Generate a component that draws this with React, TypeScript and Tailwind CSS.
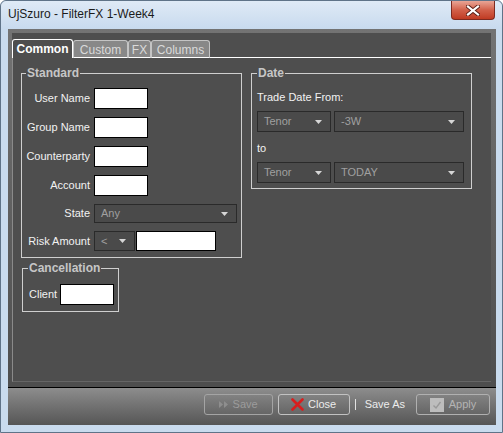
import React from 'react';

const Arrow = () => (
  <svg width="7" height="4" viewBox="0 0 7 4" className="shrink-0">
    <path d="M0 0h7L3.5 4z" fill="#d6d6d6" />
  </svg>
);

const Dropdown = ({ value, className }: { value: string; className: string }) => (
  <div className={`flex items-center justify-between border border-[#2a2a2a] bg-[#4a4a4a] pl-[6px] pr-[8px] ${className}`}>
    <span className="text-[11px] leading-none text-[#a0a0a0]">{value}</span>
    <Arrow />
  </div>
);

const Field = ({ className }: { className: string }) => (
  <input type="text" className={`border border-black bg-white outline-none ${className}`} />
);

const Legend = ({ children, className }: { children: React.ReactNode; className: string }) => (
  <legend className={`px-[1px] text-[12px] font-bold leading-[14px] text-[#c6c6c6] ${className}`}>{children}</legend>
);

const App = () => {
  const rows = ['User Name', 'Group Name', 'Counterparty', 'Account'];

  return (
    <div className="h-[433px] w-[503px] font-['Liberation_Sans',Arial,sans-serif] select-none">
      <div className="flex h-full w-full flex-col rounded-t-[6px] border border-[#5f7388] bg-[#c9dbee] pb-[7px] pl-[7px] pr-[6px]">
        {/* Title bar */}
        <div className="-mx-[7px] -mr-[6px] flex h-[28px] shrink-0 items-start justify-between rounded-t-[6px] bg-gradient-to-b from-[#dfeaf6] to-[#c8daee] pl-[7px]">
          <span className="pt-[6px] text-[12px] leading-[15px] text-[#1b1b1b]">UjSzuro - FilterFX 1-Week4</span>
          <div className="mr-[7px] flex h-[19px] w-[44px] items-center justify-center rounded-b-[4px] border border-t-0 border-[#7d2a20] bg-gradient-to-b from-[#e8a596] via-[#d2604a] to-[#c03a22]">
            <svg width="14" height="11" viewBox="0 0 14 11">
              <path d="M2 1.5l10 8M12 1.5l-10 8" stroke="#5a1e16" strokeWidth="4" strokeLinecap="square" />
              <path d="M2 1.5l10 8M12 1.5l-10 8" stroke="#ffffff" strokeWidth="2.2" strokeLinecap="square" />
            </svg>
          </div>
        </div>

        {/* Client area */}
        <div className="flex flex-1 flex-col">
          <div className="h-[358px] shrink-0 bg-gradient-to-b from-[#737373] to-[#4e4e4e] pl-[4px] pr-[5px] pt-[4px]">
            <div className="flex h-[354px] flex-col bg-[#4e4e4e] pt-[6px]">
              {/* Tabs */}
              <div className="flex h-[19px] items-end">
                <div className="flex h-[19px] w-[61px] items-center justify-center rounded-t-[3px] border-x border-t border-white bg-[#4e4e4e] text-[12px] font-bold text-white">
                  Common
                </div>
                <div className="flex h-[18px] w-[55px] items-center justify-center rounded-t-[3px] border border-[#c4c4c4] border-b-white bg-[#888888] pt-[2px] text-[12px] text-[#dadada]">
                  Custom
                </div>
                <div className="flex h-[18px] w-[23px] items-center justify-center rounded-t-[3px] border border-[#c4c4c4] border-b-white bg-[#888888] pt-[2px] text-[12px] text-[#dadada]">
                  FX
                </div>
                <div className="flex h-[18px] w-[59px] items-center justify-center rounded-t-[3px] border border-[#c4c4c4] border-b-white bg-[#888888] pt-[2px] text-[12px] text-[#dadada]">
                  Columns
                </div>
                <div className="h-full flex-1 border-b border-white" />
              </div>

              {/* Panel */}
              <div className="flex h-[324px] items-start border-b border-l border-b-[#666666] border-l-[#8a8a8a] pl-[8px] pt-[8px]">
                <div className="flex flex-col">
                  <fieldset className="w-[221px] border border-[#cfcfcf] pb-[6px]">
                    <Legend className="ml-[4px]">Standard</Legend>
                    <div className="flex flex-col gap-[8px] pt-[8px]">
                      {rows.map((r) => (
                        <div key={r} className="flex items-center">
                          <span className="w-[68px] text-right text-[11px] text-[#f2f2f2]">{r}</span>
                          <Field className="ml-[4px] h-[21px] w-[54px]" />
                        </div>
                      ))}
                      <div className="flex items-center">
                        <span className="w-[68px] text-right text-[11px] text-[#f2f2f2]">State</span>
                        <Dropdown value="Any" className="ml-[4px] h-[19px] w-[143px]" />
                      </div>
                      <div className="flex items-center">
                        <span className="w-[68px] text-right text-[11px] text-[#f2f2f2]">Risk Amount</span>
                        <Dropdown value="<" className="ml-[4px] h-[20px] w-[41px]" />
                        <Field className="ml-[1px] h-[20px] w-[80px]" />
                      </div>
                    </div>
                  </fieldset>

                  <fieldset className="ml-[1px] mt-[3px] w-[97px] border border-[#cfcfcf] pb-[6px]">
                    <Legend className="ml-[5px]">Cancellation</Legend>
                    <div className="flex items-center pl-[6px] pt-[9px]">
                      <span className="w-[31px] text-[11px] text-[#f2f2f2]">Client</span>
                      <Field className="h-[21px] w-[54px]" />
                    </div>
                  </fieldset>
                </div>

                <fieldset className="ml-[9px] w-[221px] border border-[#cfcfcf] pb-[5px] pl-[5px] pr-[7px]">
                  <Legend className="ml-[0px]">Date</Legend>
                  <div className="pt-[11px] text-[11px] leading-[13px] text-[#f2f2f2]">Trade Date From:</div>
                  <div className="mt-[7px] flex gap-[3px]">
                    <Dropdown value="Tenor" className="h-[21px] w-[74px]" />
                    <Dropdown value="-3W" className="h-[21px] w-[130px]" />
                  </div>
                  <div className="mt-[10px] text-[11px] leading-[13px] text-[#f2f2f2]">to</div>
                  <div className="mt-[7px] flex gap-[3px]">
                    <Dropdown value="Tenor" className="h-[21px] w-[74px]" />
                    <Dropdown value="TODAY" className="h-[21px] w-[130px]" />
                  </div>
                </fieldset>
              </div>
            </div>
          </div>

          {/* Button bar */}
          <div className="flex flex-1 items-start justify-end border-t border-black bg-gradient-to-b from-[#8d8d8d] to-[#565656] pr-[6px] pt-[6px]">
            <button className="flex h-[21px] w-[69px] items-center justify-center gap-[5px] rounded-[3px] border border-[#a4a4a4] text-[11px] text-[#9c9c9c]">
              <svg width="9" height="7" viewBox="0 0 9 7">
                <path d="M0 0l4 3.5L0 7zM5 0l4 3.5L5 7z" fill="#8e8e8e" />
              </svg>
              Save
            </button>
            <button className="ml-[5px] flex h-[21px] w-[72px] items-center justify-center gap-[4px] rounded-[3px] border border-[#c2c2c2] text-[11px] text-[#ececec]">
              <svg width="13" height="13" viewBox="0 0 13 13">
                <path d="M1.5 1.5l10 10M11.5 1.5l-10 10" stroke="#d81e1e" strokeWidth="2.6" strokeLinecap="round" />
              </svg>
              Close
            </button>
            <div className="ml-[5px] mt-[5px] h-[11px] w-[1px] bg-[#e2e2e2]" />
            <span className="ml-[9px] mt-[4px] text-[11px] leading-[13px] text-[#ececec]">Save As</span>
            <button className="ml-[11px] flex h-[21px] w-[74px] items-center justify-center gap-[5px] rounded-[3px] border border-[#b0b0b0] text-[11px] text-[#b4b4b4]">
              <svg width="14" height="14" viewBox="0 0 14 14">
                <rect x="0" y="0" width="14" height="14" fill="#bdbdbd" />
                <path d="M3.5 7.5l2.5 2.5 4.5-6" stroke="#999999" strokeWidth="1.4" fill="none" />
              </svg>
              Apply
            </button>
          </div>
        </div>
      </div>
    </div>
  );
};

export default App;
